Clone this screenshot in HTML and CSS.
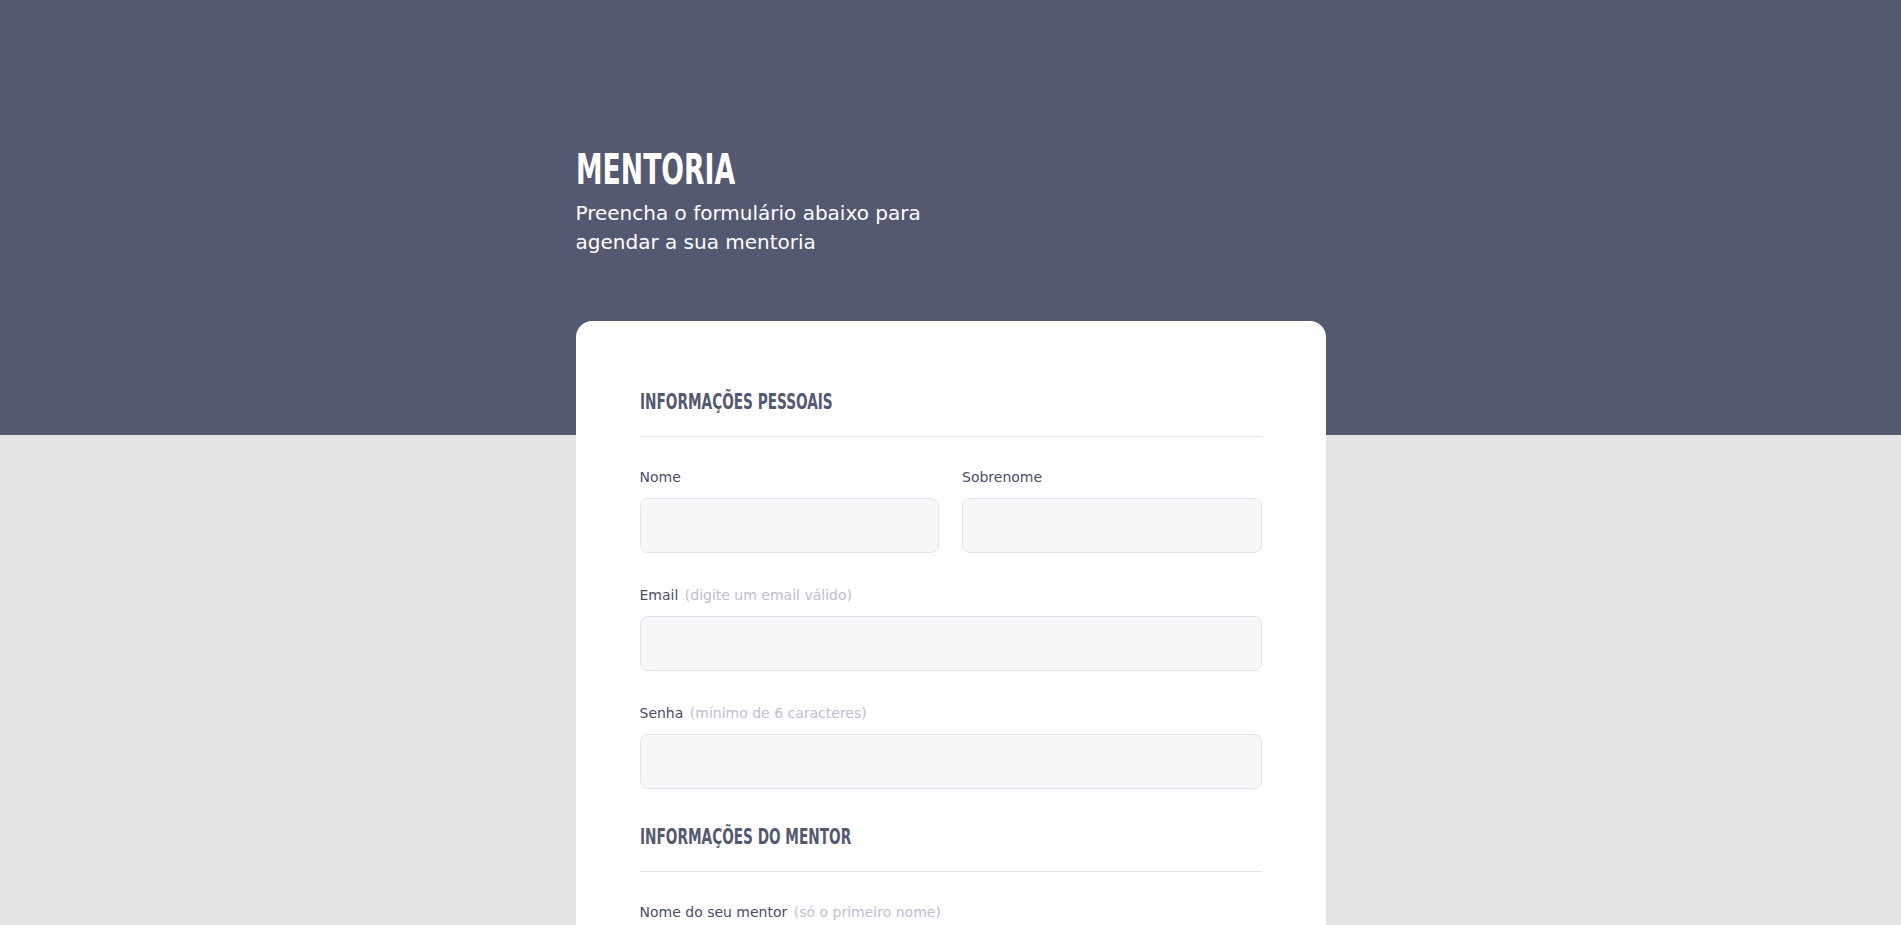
FILE: index.html
```html
<!DOCTYPE html>
<html lang="pt-BR">
<head>
<meta charset="utf-8">
<title>Mentoria</title>
<link rel="stylesheet" href="styles.css">
</head>
<body>
<header class="hero">
  <div class="hero-inner">
    <h1 class="hero-title"><span class="condensed">MENTORIA</span></h1>
    <p class="hero-sub">Preencha o formulário abaixo para agendar a sua mentoria</p>
  </div>
</header>
<main class="wrap">
  <form class="card">
    <section class="section">
      <h2 class="section-title"><span class="condensed">Informações pessoais</span></h2>
      <div class="row">
        <div class="field">
          <label class="label">Nome</label>
          <input class="input" type="text">
        </div>
        <div class="field">
          <label class="label">Sobrenome</label>
          <input class="input" type="text">
        </div>
      </div>
      <div class="field">
        <label class="label">Email <span class="hint">(digite um email válido)</span></label>
        <input class="input" type="email">
      </div>
      <div class="field">
        <label class="label">Senha <span class="hint">(mínimo de 6 caracteres)</span></label>
        <input class="input" type="password">
      </div>
    </section>
    <section class="section">
      <h2 class="section-title"><span class="condensed">Informações do mentor</span></h2>
      <div class="field">
        <label class="label">Nome do seu mentor <span class="hint">(só o primeiro nome)</span></label>
        <input class="input" type="text">
      </div>
    </section>
  </form>
</main>
</body>
</html>
```
FILE: styles.css
```css
* { box-sizing: border-box; }
html, body { margin: 0; padding: 0; }
body {
  background: #e5e5e5;
  font-family: "DejaVu Sans", "Noto Sans", sans-serif;
  color: #4a4e69;
}
.hero {
  background: #535971;
  height: 435px;
  padding-top: 147px;
}
.hero-inner {
  width: 750px;
  margin: 0 auto;
}
.condensed {
  display: inline-block;
  transform: scaleX(0.69);
  transform-origin: 0 50%;
  white-space: nowrap;
}
.hero-title {
  margin: 0;
  font-family: "DejaVu Sans Condensed", "DejaVu Sans", sans-serif;
  font-weight: 700;
  font-size: 43px;
  line-height: 44px;
  color: #ffffff;
}
.hero-sub {
  margin: 8px 0 0;
  max-width: 380px;
  font-size: 20px;
  line-height: 29px;
  color: #ffffff;
}
.wrap {
  width: 750px;
  margin: -114px auto 0;
  padding-bottom: 60px;
}
.card {
  background: #ffffff;
  border-radius: 16px;
  padding: 67px 64px 48px;
}
.section-title {
  margin: 0;
  font-family: "DejaVu Sans Condensed", "DejaVu Sans", sans-serif;
  font-weight: 700;
  font-size: 22px;
  line-height: 28px;
  text-transform: uppercase;
  color: #535971;
  padding-bottom: 20px;
  border-bottom: 1px solid #e4e4ec;
  margin-bottom: 30px;
}
.section + .section { margin-top: 34px; }
.row {
  display: grid;
  grid-template-columns: 1fr 1fr;
  gap: 23px;
}
.field { margin-bottom: 32px; }
.field:last-child { margin-bottom: 0; }
.row .field { margin-bottom: 32px; }
.label {
  display: block;
  font-size: 14px;
  line-height: 21px;
  color: #4a4e69;
  margin-bottom: 10px;
}
.hint {
  color: #c1bdd2;
  margin-left: 2px;
}
.input {
  display: block;
  width: 100%;
  height: 55px;
  background: #f8f8fb;
  border: 1px solid #e3e3ee;
  border-radius: 8px;
  font: inherit;
  padding: 0 16px;
}
```
